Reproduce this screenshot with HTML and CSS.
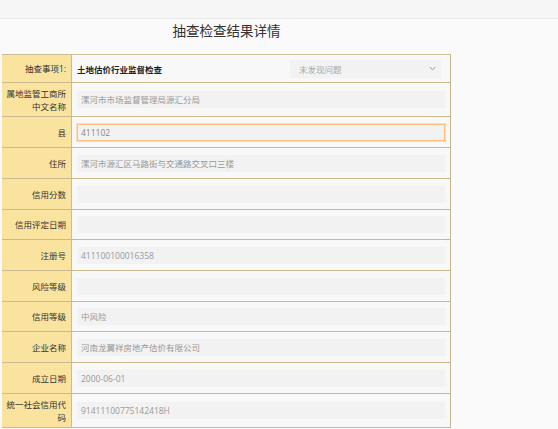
FILE: index.html
```html
<!DOCTYPE html>
<html lang="zh">
<head>
<meta charset="utf-8">
<title>抽查检查结果详情</title>
<link rel="stylesheet" href="styles.css">
</head>
<body>
<div class="topbar"></div>
<div class="page">
  <div class="title">抽查检查结果详情</div>
  <div class="sheet">
    <div class="row h28">
      <div class="label">抽查事项1:</div>
      <div class="value item">
        <span class="item-name">土地估价行业监督检查</span>
        <div class="select"><span>未发现问题</span>
          <svg class="chev" width="7" height="5" viewBox="0 0 7 5"><path d="M0.8 1 L3.5 3.8 L6.2 1" fill="none" stroke="#999" stroke-width="1"/></svg>
        </div>
      </div>
    </div>
    <div class="row h34">
      <div class="label">属地监管工商所<br>中文名称</div>
      <div class="value"><div class="input">漯河市市场监督管理局源汇分局</div></div>
    </div>
    <div class="row h31">
      <div class="label">县</div>
      <div class="value"><div class="input focus">411102</div></div>
    </div>
    <div class="row h31">
      <div class="label">住所</div>
      <div class="value"><div class="input">漯河市源汇区马路街与交通路交叉口三楼</div></div>
    </div>
    <div class="row h31">
      <div class="label">信用分数</div>
      <div class="value"><div class="input"></div></div>
    </div>
    <div class="row h30">
      <div class="label">信用评定日期</div>
      <div class="value"><div class="input"></div></div>
    </div>
    <div class="row h31">
      <div class="label">注册号</div>
      <div class="value"><div class="input">411100100016358</div></div>
    </div>
    <div class="row h31">
      <div class="label">风险等级</div>
      <div class="value"><div class="input"></div></div>
    </div>
    <div class="row h30">
      <div class="label">信用等级</div>
      <div class="value"><div class="input">中风险</div></div>
    </div>
    <div class="row h31">
      <div class="label">企业名称</div>
      <div class="value"><div class="input">河南龙翼祥房地产估价有限公司</div></div>
    </div>
    <div class="row h31">
      <div class="label">成立日期</div>
      <div class="value"><div class="input">2000-06-01</div></div>
    </div>
    <div class="row h34">
      <div class="label">统一社会信用代<br>码</div>
      <div class="value"><div class="input">91411100775142418H</div></div>
    </div>
  </div>
</div>
</body>
</html>
```
FILE: styles.css
```css
* { box-sizing: border-box; }
html, body {
  margin: 0;
  padding: 0;
  background: #fafafa;
  font-family: "Open Sans", "Noto Sans CJK SC", sans-serif;
  color: #333;
  overflow: hidden;
}
.topbar {
  height: 19px;
  background: #f6f6f6;
  border-bottom: 1px solid #e9e9e9;
}
.page {
  width: 449px;
  margin-left: 2px;
}
.title {
  height: 35px;
  padding-top: 1px;
  line-height: 22px;
  text-align: center;
  font-size: 13.5px;
  color: #333;
}
.sheet {
  border-top: 1px solid #cdbf95;
  border-right: 1px solid #c4b58a;
}
.row {
  display: grid;
  grid-template-columns: 70px 1fr;
  border-bottom: 1px solid #c9b98c;
}
.h28 { height: 28px; }
.h30 { height: 30px; }
.h31 { height: 31px; }
.h34 { height: 34px; }
.label {
  background: #fae39e;
  border-right: 1px solid #cbbb8e;
  display: flex;
  align-items: center;
  justify-content: flex-end;
  text-align: right;
  padding-right: 5px;
  font-size: 8.5px;
  line-height: 13px;
  color: #333;
}
.value {
  background: #f8f8f8;
  display: flex;
  align-items: center;
  padding: 0 5px 0 5px;
}
.input {
  flex: 1;
  height: 17px;
  background: #f2f2f2;
  padding-left: 4px;
  font-size: 8.5px;
  line-height: 17px;
  color: #999;
}
.input.focus {
  border: 1px solid #ffbf80;
  box-shadow: 0 0 0 1px #ffdcb8;
  line-height: 15px;
  padding-left: 3px;
  color: #888;
}
.item {
  justify-content: space-between;
  padding-right: 9px;
}
.item-name {
  font-size: 8.5px;
  font-weight: bold;
  color: #222;
}
.select {
  width: 151px;
  height: 18px;
  background: #f2f2f2;
  display: flex;
  align-items: center;
  justify-content: space-between;
  padding: 0 5px 0 9px;
  font-size: 8.5px;
  color: #aaa;
}
.chev { display: block; }
```
